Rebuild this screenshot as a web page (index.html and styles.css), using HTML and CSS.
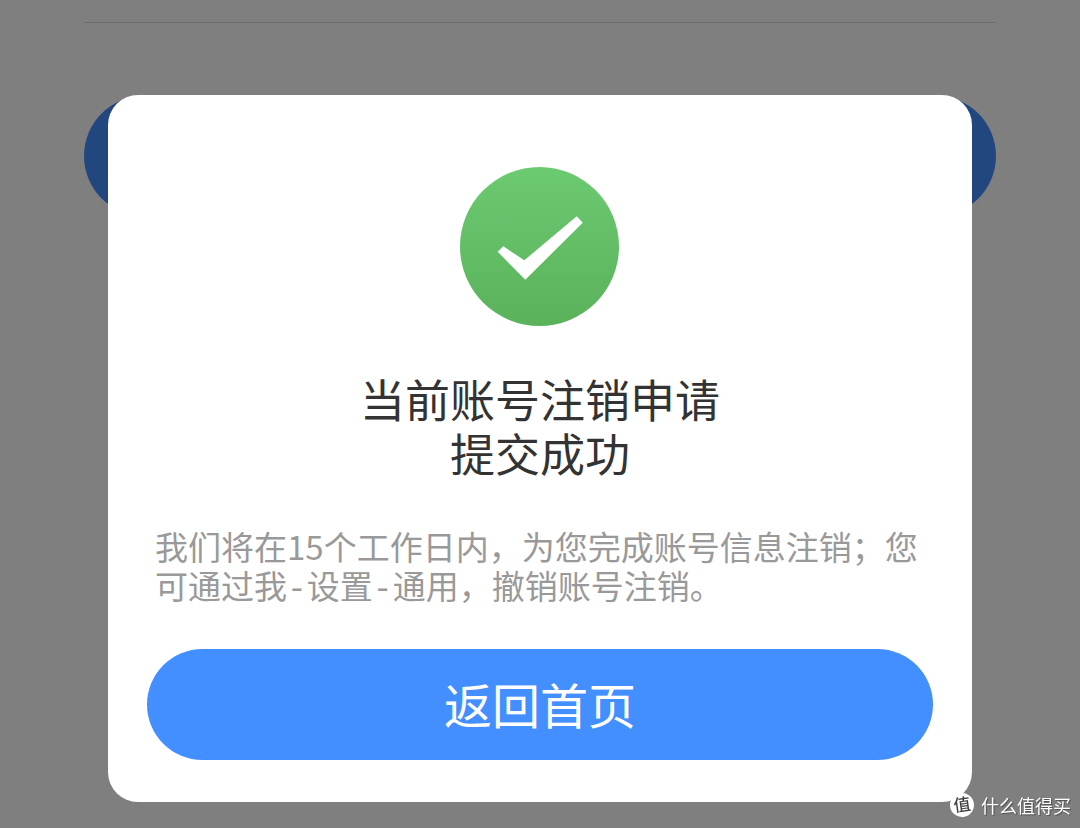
FILE: index.html
```
<!DOCTYPE html>
<html lang="zh-CN">
<head>
    <meta charset="UTF-8">
    <meta name="viewport" content="width=device-width, initial-scale=1.0">
    <title>账号注销</title>
    <link rel="stylesheet" href="styles.css">
</head>
<body>
    <div class="page">
        <hr class="divider">
        <button class="btn submit" type="button" aria-label="提交"></button>
    </div>

    <div class="overlay">
        <div class="dialog" role="dialog" aria-labelledby="title">
            <svg class="icon" viewBox="0 0 160 160" aria-hidden="true">
                <defs>
                    <linearGradient id="green" x1="0" y1="0" x2="0" y2="1">
                        <stop offset="0" stop-color="#6cca71"/>
                        <stop offset="1" stop-color="#5ab25b"/>
                    </linearGradient>
                </defs>
                <circle cx="79.5" cy="79.5" r="79.5" fill="url(#green)"/>
                <path d="M37.7 84.7 L43.3 79.3 L64.3 93.3 L116.7 49.3 L122.7 55.7 L65.3 112.7 Z" fill="#fff"/>
            </svg>
            <h2 class="title" id="title">当前账号注销申请<br>提交成功</h2>
            <p class="desc">我们将在15个工作日内，为您完成账号信息注销；您可通过我<span class="dash">-</span>设置<span class="dash">-</span>通用，撤销账号注销。</p>
            <button class="btn" type="button">返回首页</button>
        </div>
    </div>

    <div class="watermark">
        <span class="logo">值</span>
        <span>什么值得买</span>
    </div>
</body>
</html>
```

FILE: styles.css
```
* {
    box-sizing: border-box;
}
body {
    margin: 0;
    background-color: #fff;
    font-family: "Noto Sans CJK SC", sans-serif;
}
.page {
    padding: 22px 84px;
}
.divider {
    height: 1px;
    margin: 0 0 73px;
    border: none;
    background-color: #dcdcdc;
}
.btn {
    display: block;
    width: 100%;
    height: 111px;
    padding: 0 0 4px;
    border: none;
    border-radius: 60px;
    background-color: #448fff;
    color: #fff;
    font-family: inherit;
    font-size: 48px;
    line-height: 72px;
    cursor: pointer;
}
.submit {
    height: 120px;
}
.overlay {
    position: fixed;
    inset: 0;
    padding-top: 95px;
    background-color: rgba(0, 0, 0, 0.5);
    overflow: auto;
}
.dialog {
    width: 80%;
    margin: 0 auto;
    padding: 72px 39px 42px;
    border-radius: 30px;
    background-color: #fff;
    text-align: center;
}
.icon {
    display: block;
    width: 160px;
    height: 160px;
    margin: 0 auto;
}
.title {
    margin: 45px 0 47px;
    color: #333;
    font-size: 45px;
    font-weight: 400;
    line-height: 54px;
}
.desc {
    margin: 0 0 42px;
    padding: 0 8px;
    color: #999;
    font-size: 33px;
    line-height: 39px;
    text-align: left;
}
.dash {
    font-family: "Liberation Mono", monospace;
    line-height: 1;
}
.watermark {
    position: fixed;
    right: 9px;
    bottom: 11px;
    display: flex;
    align-items: center;
    gap: 7px;
    color: #fff;
    font-size: 18px;
    line-height: 24px;
    text-shadow: 1px 1px 1px rgba(0, 0, 0, 0.4);
}
.logo {
    width: 24px;
    height: 24px;
    border-radius: 50%;
    background-color: #fff;
    color: #444;
    font-size: 17px;
    font-weight: 500;
    line-height: 22px;
    text-align: center;
    text-shadow: none;
    transform: rotate(-8deg);
}
```
